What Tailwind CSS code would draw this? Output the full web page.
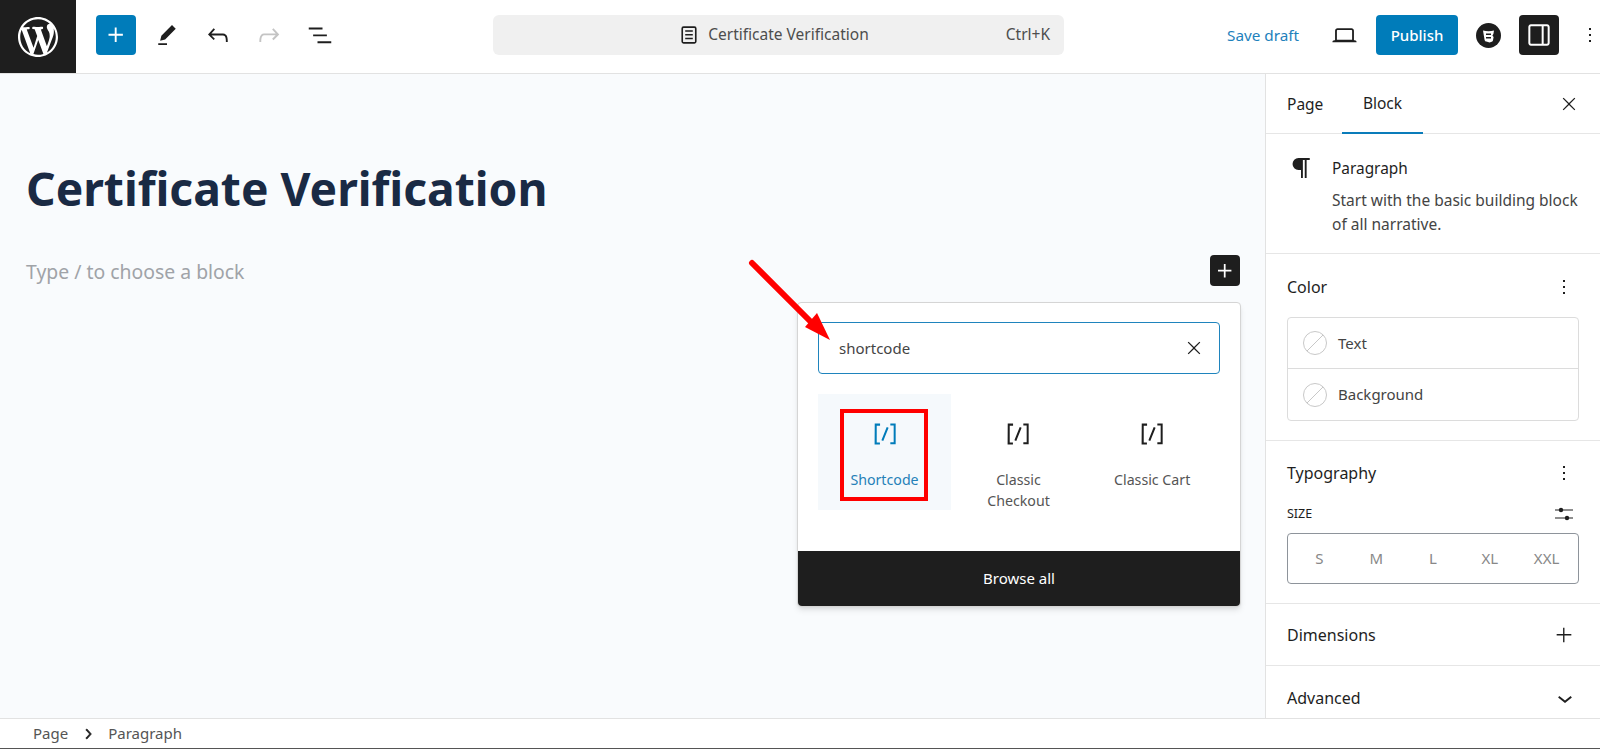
<!DOCTYPE html>
<html lang="en">
<head>
    <meta charset="UTF-8">
    <meta name="viewport" content="width=device-width, initial-scale=1.0">
    <title>Certificate Verification</title>
    <script src="https://cdn.jsdelivr.net/npm/@tailwindcss/browser@4"></script>
</head>
<body class="font-['Noto_Sans',sans-serif] bg-white text-[#1e1e1e] overflow-hidden">
<div class="w-[1600px] h-[749px] flex flex-col border-b border-[#555]">

    <!-- top bar -->
    <header class="h-[74px] shrink-0 flex border-b border-[#e2e2e2] bg-white overflow-hidden">
        <div class="w-[76px] h-[73px] shrink-0 bg-[#1e1e1e] flex items-center justify-center">
            <svg class="w-10 h-10" viewBox="0 0 20 20" fill="#fff"><path d="M20 10c0-5.51-4.49-10-10-10C4.48 0 0 4.49 0 10c0 5.52 4.48 10 10 10 5.51 0 10-4.48 10-10zM7.78 15.37L4.37 6.22c.55-.02 1.17-.08 1.17-.08.5-.06.44-1.13-.06-1.11 0 0-1.45.11-2.37.11-.18 0-.37 0-.58-.01C4.12 2.69 6.87 1.11 10 1.11c2.33 0 4.45.87 6.05 2.34-.68-.11-1.65.39-1.65 1.58 0 .74.45 1.36.9 2.1.35.61.55 1.36.55 2.46 0 1.49-1.4 5-1.4 5l-3.03-8.37c.54-.02.82-.17.82-.17.5-.05.44-1.25-.06-1.22 0 0-1.44.12-2.38.12-.87 0-2.33-.12-2.33-.12-.5-.03-.56 1.2-.06 1.22l.92.08 1.26 3.41zM17.41 10c.24-.64.74-1.87.43-4.25.7 1.29 1.05 2.71 1.05 4.25 0 3.29-1.73 6.24-4.4 7.78.97-2.59 1.94-5.2 2.92-7.78zM6.1 18.09C3.12 16.65 1.11 13.53 1.11 10c0-1.3.23-2.48.72-3.59C3.25 10.3 4.67 14.2 6.1 18.09zm4.03-6.63l2.58 6.98c-.86.29-1.76.45-2.71.45-.79 0-1.57-.11-2.29-.33.81-2.38 1.62-4.74 2.42-7.1z"/></svg>
        </div>
        <div class="flex-1 h-[70px] flex items-center">
            <div class="w-[417px] shrink-0 pl-5 flex items-center">
                <button class="w-10 h-10 rounded-sm bg-[#007cba] flex items-center justify-center">
                    <svg class="w-[30px] h-[30px]" viewBox="0 0 24 24" fill="#fff"><path d="M11 12.500V17.500H12.500V12.500H17.500V11H12.500V6H11V11H6V12.500H11Z"/></svg>
                </button>
                <div class="ml-[11px] w-10 flex justify-center">
                    <svg class="w-[30px] h-[30px]" viewBox="0 0 24 24" fill="#1e1e1e"><path d="m19 7-3-3-8.500 8.500-1 4 4-1L19 7Zm-7 11.500H5V20h7v-1.500Z"/></svg>
                </div>
                <div class="ml-[11px] w-10 flex justify-center">
                    <svg class="w-[30px] h-[30px]" viewBox="0 0 24 24" fill="#1e1e1e"><path d="M18.300 11.700c-.6-.6-1.400-.9-2.300-.9H6.700l2.900-3.300-1.100-1-4.500 5L8.500 16l1-1-2.700-2.700H16c.5 0 .9.2 1.300.5 1 1 1 3.400 1 4.500v.3h1.500v-.2c0-1.500 0-4.300-1.500-5.700z"/></svg>
                </div>
                <div class="ml-[11px] w-10 flex justify-center">
                    <svg class="w-[30px] h-[30px]" viewBox="0 0 24 24" fill="#c4c4c4"><path d="M15.600 6.500l-1.100 1 2.900 3.300H8c-.9 0-1.700.3-2.300.9-1.400 1.500-1.400 4.200-1.400 5.600v.2h1.500v-.3c0-1.100 0-3.500 1-4.500.3-.3.7-.5 1.300-.5h9.200L14.500 15l1.100 1.100 4.600-4.600-4.600-5z"/></svg>
                </div>
                <div class="ml-[11px] w-10 flex justify-center">
                    <svg class="w-[30px] h-[30px]" viewBox="0 0 24 24" fill="#1e1e1e"><path d="M3 6h11v1.500H3V6Zm3.500 5.500h11V13h-11v-1.500ZM21 17H10v1.500h11V17Z"/></svg>
                </div>
            </div>
            <div class="w-[571px] h-10 shrink-0 rounded-md bg-[#f0f0f0] relative flex items-center justify-center pr-[12px] text-[15.500px] text-[#4d4d4d]">
                <svg class="w-[26px] h-[26px] mr-[6px]" viewBox="0 0 24 24" fill="#1e1e1e"><path d="M15.500 7.500h-7V9h7V7.500Zm-7 3.500h7v1.500h-7V11Zm7 3.500h-7V16h7v-1.500Z"/><path d="M17 4H7a2 2 0 0 0-2 2v12a2 2 0 0 0 2 2h10a2 2 0 0 0 2-2V6a2 2 0 0 0-2-2Zm.5 14a.5.5 0 0 1-.5.5H7a.5.5 0 0 1-.5-.5V6a.5.5 0 0 1 .5-.5h10a.5.5 0 0 1 .5.5v12Z"/></svg>
                <span>Certificate Verification</span>
                <span class="absolute right-[14px] text-[15.500px]">Ctrl+K</span>
            </div>
            <span class="ml-[163px] w-[73px] shrink-0 text-[15.300px] text-[#1e81bc] whitespace-nowrap">Save draft</span>
            <svg class="ml-[30px] w-[29px] h-[29px] shrink-0" viewBox="0 0 24 24" fill="#1e1e1e"><path d="M20.500 16h-.7V8c0-1.100-.9-2-2-2H6.200c-1.100 0-2 .9-2 2v8h-.7c-.8 0-1.500.7-1.500 1.500h20c0-.8-.7-1.500-1.500-1.500zM5.700 8c0-.3.2-.5.5-.5h11.600c.3 0 .5.2.5.5v7.600H5.700V8z"/></svg>
            <button class="ml-[17px] w-[82px] h-10 shrink-0 rounded-sm bg-[#007cba] text-white text-[15px] font-medium">Publish</button>
            <svg class="ml-[18px] w-[25px] h-[25px] shrink-0" viewBox="0 0 25 25"><circle cx="12.500" cy="12.500" r="12.500" fill="#1e1e1e"/><path d="M7 7.500c3.500 1 7.500 1 11 0l-.6 3.500-1 1.500 1.200 1.500-.6 3.200c-.2 1-1 1.600-2 1.800l-1.500.5-1.500-.5-1.700-.4c-.9-.2-1.500-.8-1.700-1.700Z" fill="#fff"/><path d="M10 10.500h5v1.500h-5zM10 14h5v1.500h-5z" fill="#1e1e1e"/></svg>
            <div class="ml-[18px] w-10 h-10 shrink-0 rounded-sm bg-[#1e1e1e] flex items-center justify-center">
                <svg class="w-8 h-8" viewBox="0 0 24 24" fill="#fff"><path d="M18 4H6c-1.100 0-2 .9-2 2v12c0 1.100.9 2 2 2h12c1.100 0 2-.9 2-2V6c0-1.100-.9-2-2-2zm-4 14.500H6c-.3 0-.5-.2-.5-.5V6c0-.3.2-.5.5-.5h8v13zm4.500-.5c0 .3-.2.500-.5.500h-2.500v-13H18c.3 0 .5.2.5.5v12z"/></svg>
            </div>
            <svg class="ml-[19px] w-6 h-6 shrink-0" viewBox="0 0 24 24" fill="#1e1e1e"><path d="M13 19h-2v-2h2v2zm0-6h-2v-2h2v2zm0-6h-2V5h2v2z"/></svg>
        </div>
    </header>

    <!-- body -->
    <main class="flex-1 flex min-h-0 relative">
        <div class="flex-1 bg-[#f9fbfd] relative pl-[26px] pt-[83px]">
            <h1 class="text-[46.200px] leading-[64px] font-bold text-[#1a2a44] whitespace-nowrap">Certificate Verification</h1>
            <p class="mt-[37px] text-[19.400px] leading-7 text-[#a0a3a8]">Type / to choose a block</p>

            <button class="absolute left-[1210px] top-[181px] w-[30px] h-[31px] rounded-sm bg-[#1e1e1e] flex items-center justify-center">
                <svg class="w-7 h-7" viewBox="0 0 24 24" fill="#fff"><path d="M11 12.500V17.500H12.500V12.500H17.500V11H12.500V6H11V11H6V12.500H11Z"/></svg>
            </button>

            <!-- inserter popover -->
            <div class="absolute left-[797px] top-[228px] w-[444px] h-[305px] bg-white border border-[#d5d5d5] rounded-sm shadow-md flex flex-col">
                <div class="px-[20px] pt-[19px]">
                    <div class="h-[52px] border border-[#1f84bd] rounded-sm flex items-center justify-between pl-[20px] pr-[15px] text-[15px] text-[#444]">
                        <span>shortcode</span>
                        <svg class="w-5 h-5" viewBox="0 0 24 24" fill="#1e1e1e"><path d="m13.060 12 6.470-6.470-1.060-1.060L12 10.940 5.530 4.470 4.470 5.530 10.940 12l-6.470 6.470 1.060 1.060L12 13.060l6.470 6.470 1.060-1.060L13.060 12Z"/></svg>
                    </div>
                    <div class="mt-[20px] grid grid-cols-3 w-[401px] text-[14.200px] leading-[21px] text-center text-[#555]">
                        <div class="w-[133px] h-[116px] bg-[#f5f9fc] flex flex-col items-center pt-[24px] text-[#2581b8]">
                            <svg class="w-8 h-8" viewBox="0 0 24 24" fill="#007cba"><path d="M16 4.200v1.500h2.500v12.500H16v1.500h4V4.200h-4zM4.200 19.800h4v-1.500H5.800V5.800h2.500V4.200h-4l-.1 15.600zm5.100-3.100l1.400.6 4-10-1.400-.6-4 10z"/></svg>
                            <span class="mt-[19px]">Shortcode</span>
                        </div>
                        <div class="flex flex-col items-center pt-[24px]">
                            <svg class="w-8 h-8" viewBox="0 0 24 24" fill="#1e1e1e"><path d="M16 4.200v1.500h2.500v12.500H16v1.500h4V4.200h-4zM4.200 19.800h4v-1.500H5.800V5.800h2.500V4.200h-4l-.1 15.600zm5.100-3.100l1.400.6 4-10-1.400-.6-4 10z"/></svg>
                            <span class="mt-[19px]">Classic<br>Checkout</span>
                        </div>
                        <div class="flex flex-col items-center pt-[24px]">
                            <svg class="w-8 h-8" viewBox="0 0 24 24" fill="#1e1e1e"><path d="M16 4.200v1.500h2.500v12.500H16v1.500h4V4.200h-4zM4.200 19.800h4v-1.500H5.800V5.800h2.500V4.200h-4l-.1 15.600zm5.100-3.100l1.400.6 4-10-1.400-.6-4 10z"/></svg>
                            <span class="mt-[19px]">Classic Cart</span>
                        </div>
                    </div>
                </div>
                <button class="mt-auto h-[55px] bg-[#1e1e1e] text-white text-[15px] rounded-b-sm">Browse all</button>
            </div>

            <!-- annotation -->
            <div class="absolute left-[840px] top-[335px] w-[88px] h-[92px] border-[4px] border-[#ff0000]"></div>
            <svg class="absolute left-[745px] top-[180px]" width="95" height="95" viewBox="745 254 95 95">
                <path d="M752 263 L815 326" stroke="#ff0000" stroke-width="6" stroke-linecap="round"/>
                <polygon points="830,340 805,327 817,313" fill="#ff0000"/>
            </svg>
        </div>

        <!-- sidebar -->
        <aside class="w-[335px] shrink-0 border-l border-[#e2e2e2] bg-white flex flex-col overflow-hidden text-[15px]">
            <div class="h-[60px] shrink-0 border-b border-[#e6e6e6] flex items-center relative text-[15.500px]">
                <span class="ml-[21px] w-[36px] pt-[2px] whitespace-nowrap">Page</span>
                <div class="ml-[19px] w-[81px] h-[60px] pt-[2px] flex items-center justify-center border-b-2 border-[#0a7cba]">Block</div>
                <svg class="absolute right-[21px] top-[20px] w-5 h-5" viewBox="0 0 24 24" fill="#1e1e1e"><path d="m13.060 12 6.470-6.470-1.060-1.060L12 10.940 5.530 4.470 4.470 5.530 10.940 12l-6.470 6.470 1.060 1.060L12 13.060l6.470 6.470 1.060-1.060L13.060 12Z"/></svg>
            </div>

            <div class="h-[120px] shrink-0 border-b border-[#e6e6e6] flex pl-[20px] pt-[19px]">
                <svg class="w-[30px] h-[30px] shrink-0" viewBox="0 0 24 24" fill="#1e1e1e"><path d="m9.990 13.500 2.010.01V20h1.500V5.500H15V20h1.500V5.500H19V4h-9.010a4.750 4.750 0 0 0 0 9.500Z"/></svg>
                <div class="ml-[16px] pt-[4px]">
                    <div class="leading-6 text-[15.400px]">Paragraph</div>
                    <div class="mt-[8px] leading-[23.500px] text-[#444] text-[15.500px] w-[262px]">Start with the basic building block of all narrative.</div>
                </div>
            </div>

            <div class="h-[187px] shrink-0 border-b border-[#e6e6e6] px-[21px] pt-[21px]">
                <div class="flex items-center justify-between h-6 text-[16px]">
                    <span>Color</span>
                    <svg class="w-6 h-6 mr-[3px]" viewBox="0 0 24 24" fill="#1e1e1e"><path d="M13 19h-2v-2h2v2zm0-6h-2v-2h2v2zm0-6h-2V5h2v2z"/></svg>
                </div>
                <div class="mt-[18px] w-[292px] h-[104px] border border-[#dcdcdc] rounded-sm text-[#444]">
                    <div class="h-[51px] border-b border-[#dcdcdc] flex items-center pl-[15px] gap-[11px]">
                        <svg class="w-6 h-6" viewBox="0 0 24 24" fill="none" stroke="#c8c8c8"><circle cx="12" cy="12" r="11.500"/><path d="M4 20 20 4"/></svg>
                        <span>Text</span>
                    </div>
                    <div class="h-[51px] flex items-center pl-[15px] gap-[11px]">
                        <svg class="w-6 h-6" viewBox="0 0 24 24" fill="none" stroke="#c8c8c8"><circle cx="12" cy="12" r="11.500"/><path d="M4 20 20 4"/></svg>
                        <span>Background</span>
                    </div>
                </div>
            </div>

            <div class="h-[163px] shrink-0 border-b border-[#e6e6e6] px-[21px] pt-[20px]">
                <div class="flex items-center justify-between h-6 text-[16px]">
                    <span>Typography</span>
                    <svg class="w-6 h-6 mr-[3px]" viewBox="0 0 24 24" fill="#1e1e1e"><path d="M13 19h-2v-2h2v2zm0-6h-2v-2h2v2zm0-6h-2V5h2v2z"/></svg>
                </div>
                <div class="mt-[17px] flex items-center justify-between h-6">
                    <span class="text-[12.500px]">SIZE</span>
                    <svg class="w-6 h-6 mr-[3px]" viewBox="0 0 24 24" fill="#1e1e1e"><path d="M3 7.500h18V8.600H3zM3 15.400h18v1.100H3z"/><circle cx="9" cy="8" r="2.200"/><circle cx="15" cy="16" r="2.200"/></svg>
                </div>
                <div class="mt-[7px] w-[292px] h-[51px] border border-[#8e949b] rounded-sm grid grid-cols-5 items-center px-[3px] text-center text-[#888]">
                    <span>S</span><span>M</span><span>L</span><span>XL</span><span>XXL</span>
                </div>
            </div>

            <div class="h-[62px] shrink-0 border-b border-[#e6e6e6] flex items-center justify-between pl-[21px] pr-[25px] text-[16px]">
                <span>Dimensions</span>
                <svg class="w-[22px] h-[22px]" viewBox="0 0 24 24" fill="#1e1e1e"><path d="M11 12.500V20H12.500V12.500H20V11H12.500V4H11V11H4V12.500H11Z"/></svg>
            </div>
            <div class="h-[64px] shrink-0 flex items-center justify-between pl-[21px] pr-[20px] text-[16px]">
                <span>Advanced</span>
                <svg class="w-[30px] h-[30px]" viewBox="0 0 24 24" fill="#1e1e1e"><path d="M17.500 11.600L12 16l-5.500-4.400.9-1.200L12 14l4.500-3.600 1 1.200z"/></svg>
            </div>
        </aside>
    </main>

    <!-- breadcrumbs -->
    <footer class="h-[30px] shrink-0 border-t border-[#e2e2e2] bg-white flex items-center pl-[33px] text-[15px] text-[#555]">
        <span>Page</span>
        <svg class="w-5 h-5 ml-[10px] mr-[10px]" viewBox="0 0 24 24" fill="#1e1e1e" stroke="#1e1e1e"><path d="M10.600 6L9.400 7l4.600 5-4.600 5 1.200 1 5.400-6z"/></svg>
        <span>Paragraph</span>
    </footer>
</div>
</body>
</html>
